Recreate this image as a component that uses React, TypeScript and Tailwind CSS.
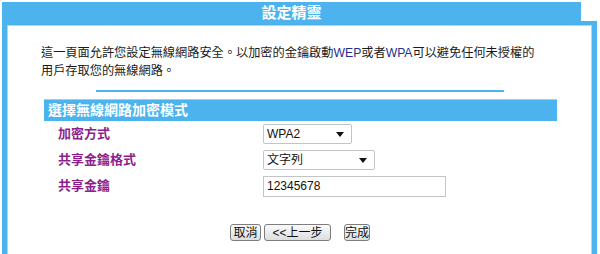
import React from "react";

const FONT = { fontFamily: '"Liberation Sans", Arial, "Noto Sans CJK TC", sans-serif' };

function FakeSelect({ value, width }: { value: string; width: string }) {
  return (
    <div
      className={`${width} h-[20px] flex items-center justify-between border border-[#c4c4c4] rounded-[2px] bg-white pl-[3px] pr-[7px] text-[12px] text-[#111]`}
    >
      <span>{value}</span>
      <svg width="8" height="5" viewBox="0 0 8 5">
        <path d="M0 0 H8 L4 5 Z" fill="#111" />
      </svg>
    </div>
  );
}

function Btn({ children, className = "" }: { children: React.ReactNode; className?: string }) {
  return (
    <button
      className={`h-[17px] px-0 whitespace-nowrap text-[12px] leading-none text-[#111] border border-[#7d7d7d] rounded-[3px] bg-gradient-to-b from-[#fbfbfb] to-[#dedede] ${className}`}
    >
      {children}
    </button>
  );
}

export default function App() {
  const rows = [
    { label: "加密方式", field: <FakeSelect value="WPA2" width="w-[89px]" /> },
    { label: "共享金鑰格式", field: <FakeSelect value="文字列" width="w-[112px]" /> },
    {
      label: "共享金鑰",
      field: (
        <div className="w-[183px] h-[21px] flex items-center border border-[#c4c4c4] bg-white pl-[3px] text-[12px] text-[#111]">
          12345678
        </div>
      ),
    },
  ];

  return (
    <div className="relative w-[600px] h-[254px] overflow-hidden bg-white pt-[2px] pl-[2px]" style={FONT}>
      {/* title tab */}
      <div className="relative z-10 w-[579px] h-[23px] bg-[#4cb3ef] flex items-center justify-center text-white font-bold text-[15px]">
        設定精靈
      </div>

      {/* frame */}
      <div className="-mt-[4px] w-[595px] h-[260px] border-[#4cb3ef] border-l-[5px] border-r-[5px] border-t-[4px] shadow-[inset_1px_1px_0_#a3d9f9,inset_-1px_0_0_#a3d9f9]">
        <div className="pt-[19px] pl-[34px] pr-[30px] text-[12.2px] leading-[18px] text-[#1a1a1a] whitespace-nowrap">
          這一頁面允許您設定無線網路安全。以加密的金鑰啟動<span className="text-[#23308f]">WEP</span>或者
          <span className="text-[#23308f]">WPA</span>可以避免任何未授權的
          <br />
          用戶存取您的無線網路。
        </div>

        <div className="ml-[89px] mt-[10px] w-[408px] h-[2px] bg-[#4cb3ef]" />

        <div className="ml-[37px] mt-[7px] w-[513px] h-[22px] bg-[#4cb3ef] border-t border-[#93d2f8] flex items-center pl-[4px] text-white font-bold text-[14px]">
          選擇無線網路加密模式
        </div>

        <div className="ml-[51px] mt-[3px] flex flex-col gap-[6px]">
          {rows.map((r) => (
            <div key={r.label} className="flex items-center h-[20px]">
              <div className="w-[205px] text-[13px] font-bold text-[#8b1f8e]">{r.label}</div>
              {r.field}
            </div>
          ))}
        </div>

        <div className="mt-[28px] ml-[223px] flex items-center">
          <Btn className="w-[31px]">取消</Btn>
          <Btn className="ml-[3px] w-[67px]">&lt;&lt;上一步</Btn>
          <Btn className="ml-[13px] w-[26px]">完成</Btn>
        </div>
      </div>
    </div>
  );
}
